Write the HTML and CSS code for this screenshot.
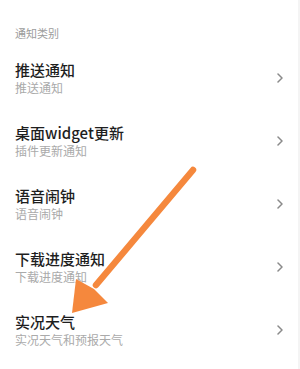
FILE: index.html
```html
<!DOCTYPE html>
<html lang="zh">
<head>
<meta charset="utf-8">
<link rel="stylesheet" href="styles.css">
</head>
<body>
<div class="page">
  <div class="section-title">通知类别</div>
  <div class="list">
    <div class="row">
      <div class="texts"><div class="title">推送通知</div><div class="sub">推送通知</div></div>
      <svg class="chev" viewBox="0 0 6 10" width="6" height="10"><path d="M1 1 L5 5 L1 9" fill="none" stroke="#8a8a8a" stroke-width="1.5" stroke-linecap="round" stroke-linejoin="round"/></svg>
    </div>
    <div class="row">
      <div class="texts"><div class="title">桌面widget更新</div><div class="sub">插件更新通知</div></div>
      <svg class="chev" viewBox="0 0 6 10" width="6" height="10"><path d="M1 1 L5 5 L1 9" fill="none" stroke="#8a8a8a" stroke-width="1.5" stroke-linecap="round" stroke-linejoin="round"/></svg>
    </div>
    <div class="row">
      <div class="texts"><div class="title">语音闹钟</div><div class="sub">语音闹钟</div></div>
      <svg class="chev" viewBox="0 0 6 10" width="6" height="10"><path d="M1 1 L5 5 L1 9" fill="none" stroke="#8a8a8a" stroke-width="1.5" stroke-linecap="round" stroke-linejoin="round"/></svg>
    </div>
    <div class="row">
      <div class="texts"><div class="title">下载进度通知</div><div class="sub">下载进度通知</div></div>
      <svg class="chev" viewBox="0 0 6 10" width="6" height="10"><path d="M1 1 L5 5 L1 9" fill="none" stroke="#8a8a8a" stroke-width="1.5" stroke-linecap="round" stroke-linejoin="round"/></svg>
    </div>
    <div class="row">
      <div class="texts"><div class="title">实况天气</div><div class="sub">实况天气和预报天气</div></div>
      <svg class="chev" viewBox="0 0 6 10" width="6" height="10"><path d="M1 1 L5 5 L1 9" fill="none" stroke="#8a8a8a" stroke-width="1.5" stroke-linecap="round" stroke-linejoin="round"/></svg>
    </div>
  </div>
  <svg class="arrow" viewBox="0 0 300 369" width="300" height="369">
    <line x1="193" y1="170" x2="96" y2="285" stroke="#f5883d" stroke-width="6.5" stroke-linecap="round"/>
    <polygon points="72,313 76,279 94,289 108,303" fill="#f5883d"/>
  </svg>
</div>
</body>
</html>
```
FILE: styles.css
```css
html, body {
  margin: 0;
  padding: 0;
  background: #ffffff;
}
body {
  font-family: "Noto Sans CJK SC", "Noto Sans", sans-serif;
}
.page {
  position: relative;
  width: 300px;
  height: 369px;
  overflow: hidden;
  border-right: 2px solid #f4f4f4;
  box-sizing: border-box;
}
.section-title {
  padding: 25px 15px 0;
  font-size: 11px;
  line-height: 16px;
  color: #9c9c9c;
  margin-bottom: 5.5px;
}
.list {
  display: flex;
  flex-direction: column;
}
.row {
  height: 63px;
  display: flex;
  align-items: center;
  justify-content: space-between;
  padding: 0 15px;
}
.texts {
  display: flex;
  flex-direction: column;
}
.title {
  font-size: 15px;
  line-height: 20px;
  font-weight: 500;
  color: #1e1e1e;
}
.sub {
  font-size: 12px;
  line-height: 16px;
  color: #aaaaaa;
}
.chev {
  display: block;
}
.arrow {
  position: absolute;
  left: 0;
  top: 0;
  pointer-events: none;
}
```
